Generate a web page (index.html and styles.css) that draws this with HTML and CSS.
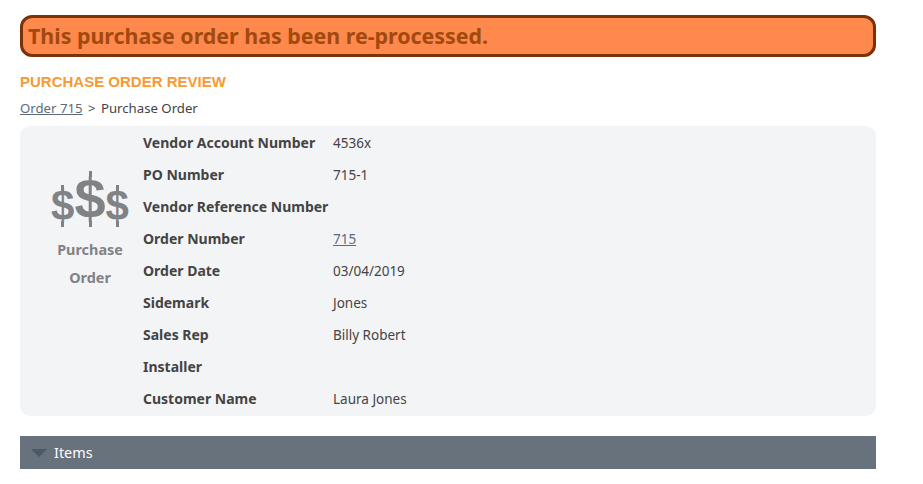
FILE: index.html
```html
<!DOCTYPE html>
<html lang="en">
<head>
    <meta charset="UTF-8">
    <title>Purchase Order Review</title>
    <link rel="stylesheet" href="styles.css">
</head>
<body>
    <div class="alert">This purchase order has been re-processed.</div>

    <h2 class="page-title">PURCHASE ORDER REVIEW</h2>
    <div class="crumbs"><a href="#">Order 715</a> <span class="sep">&gt;</span> Purchase Order</div>

    <div class="panel">
        <div class="badge">
            <div class="dollars"><span>$</span><span class="big">$</span><span>$</span></div>
            <div class="badge-label">Purchase<br>Order</div>
        </div>
        <dl class="fields">
            <dt>Vendor Account Number</dt><dd>4536x</dd>
            <dt>PO Number</dt><dd>715-1</dd>
            <dt>Vendor Reference Number</dt><dd></dd>
            <dt>Order Number</dt><dd><a href="#">715</a></dd>
            <dt>Order Date</dt><dd>03/04/2019</dd>
            <dt>Sidemark</dt><dd>Jones</dd>
            <dt>Sales Rep</dt><dd>Billy Robert</dd>
            <dt>Installer</dt><dd></dd>
            <dt>Customer Name</dt><dd>Laura Jones</dd>
        </dl>
    </div>

    <div class="section-bar"><span class="arrow"></span>Items</div>
</body>
</html>
```

FILE: styles.css
```css
body {
    margin: 0;
    padding: 15px 47px 15px 20px;
    background-color: #fff;
    color: #444;
    font-family: 'Noto Sans', sans-serif;
    font-size: 13.5px;
}

a {
    color: #5c6b7a;
}

.alert {
    height: 36px;
    padding-left: 5px;
    border: 3px solid #7a3208;
    border-radius: 12px;
    background-color: #ff884d;
    color: #a04a10;
    font-size: 21.4px;
    font-weight: bold;
    line-height: 36px;
}

.page-title {
    margin: 16px 0 0;
    color: #f79a33;
    font-family: 'Liberation Sans', sans-serif;
    font-size: 15px;
    font-weight: bold;
    line-height: 18px;
}

.crumbs {
    margin-top: 8px;
    font-size: 13.2px;
    line-height: 18px;
}

.crumbs .sep {
    margin: 0 2px;
}

.panel {
    display: flex;
    height: 290px;
    margin-top: 9px;
    border-radius: 10px;
    background-color: #f3f4f6;
}

.badge {
    width: 123px;
    padding: 31px 0 0 17px;
    box-sizing: border-box;
    color: #808285;
    text-align: center;
}

.dollars {
    display: flex;
    justify-content: center;
    align-items: flex-end;
    height: 70px;
    font-family: 'Liberation Sans', sans-serif;
    font-size: 42px;
    font-weight: bold;
    line-height: 42px;
}

.dollars span {
    position: relative;
    height: 42px;
}

/* bar of the dollar sign sticks out past the S */
.dollars span::before,
.dollars span::after {
    content: "";
    position: absolute;
    left: 50%;
    width: 3px;
    height: 6px;
    margin-left: -1.5px;
    background-color: #808285;
}

.dollars span::before {
    top: 0;
}

.dollars span::after {
    bottom: 0;
}

.dollars .big {
    height: 56px;
    font-size: 56px;
    line-height: 56px;
}

.badge-label {
    margin-top: 9px;
    font-size: 14.4px;
    font-weight: bold;
    line-height: 28px;
}

.fields {
    display: grid;
    grid-template-columns: 190px 1fr;
    grid-auto-rows: 32px;
    flex: 1;
    margin: 1px 0 0;
    line-height: 32px;
}

.fields dt {
    font-size: 14px;
    font-weight: bold;
}

.fields dd {
    margin: 0;
}

.section-bar {
    display: flex;
    align-items: center;
    height: 32px;
    margin-top: 20px;
    padding: 0 0 1px 11px;
    background-color: #67727d;
    color: #fff;
    font-size: 14.4px;
}

.arrow {
    width: 0;
    height: 0;
    margin: 1px 7px 0 0;
    border-top: 8px solid #4c5a68;
    border-left: 8px solid transparent;
    border-right: 8px solid transparent;
}
```
